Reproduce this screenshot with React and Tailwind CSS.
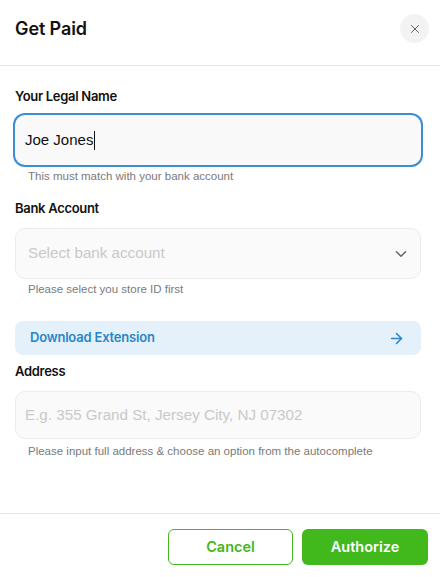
import { ChevronDown, X, ArrowRight } from "lucide-react";

const arial = { fontFamily: "'Liberation Sans', Arial, sans-serif" };

export default function App() {
  return (
    <div
      className="w-[440px] h-[577px] bg-white flex flex-col text-[#111]"
      style={{ fontFamily: "Inter, 'Noto Sans', sans-serif" }}
    >
      {/* Header */}
      <div className="h-[66px] shrink-0 flex items-center justify-between pl-[15px] pr-[11px] border-b border-[#e8e8e8]">
        <h1 className="text-[18px] font-semibold tracking-[-0.1px] -mt-[8px]">Get Paid</h1>
        <button className="w-[29px] h-[29px] -mt-[8px] rounded-full bg-[#f3f3f3] flex items-center justify-center text-[#555]">
          <X size={14} strokeWidth={1.6} />
        </button>
      </div>

      {/* Body */}
      <div className="flex-1 pl-[15px] pr-[19px] pt-[20px]">
        <label className="block text-[13px] leading-[20px] font-semibold tracking-[-0.3px]">Your Legal Name</label>
        <div className="mt-[9px] h-[50px] rounded-[10px] bg-[#f9f9f9] ring-2 ring-[#3a8ed3] flex items-center px-[10px]">
          <span className="text-[15px]" style={arial}>Joe Jones</span>
          <span className="w-px h-[19px] bg-[#111] ml-px" />
        </div>
        <p className="mt-[3px] pl-[13px] text-[11.5px] leading-[16px] text-[#7a7a7a]" style={arial}>
          This must match with your bank account
        </p>

        <label className="block mt-[14px] text-[13px] leading-[20px] font-semibold tracking-[-0.3px]">Bank Account</label>
        <div className="mt-[10px] h-[51px] rounded-[10px] bg-[#fafafa] border border-[#ececec] flex items-center justify-between pl-[12px] pr-[10px]">
          <span className="text-[15.2px] text-[#c9c9c9]" style={arial}>Select bank account</span>
          <ChevronDown size={18} strokeWidth={2} className="text-[#666]" />
        </div>
        <p className="mt-[2px] pl-[13px] text-[11.5px] leading-[16px] text-[#7a7a7a]" style={arial}>
          Please select you store ID first
        </p>

        <div className="mt-[24px] h-[34px] rounded-[8px] bg-[#e5f1fa] flex items-center justify-between pl-[15px] pr-[16px] text-[#2a86c9]">
          <span className="text-[13px] font-semibold tracking-[-0.2px]">Download Extension</span>
          <ArrowRight size={17} strokeWidth={2.2} />
        </div>

        <label className="block mt-[6px] text-[13px] leading-[20px] font-semibold tracking-[-0.3px]">Address</label>
        <div className="mt-[10px] h-[48px] rounded-[10px] bg-[#fafafa] border border-[#ececec] flex items-center px-[9px]">
          <span className="text-[15.2px] text-[#c9c9c9]" style={arial}>E.g. 355 Grand St, Jersey City, NJ 07302</span>
        </div>
        <p className="mt-[4px] pl-[13px] text-[11.5px] leading-[16px] text-[#7a7a7a]" style={arial}>
          Please input full address &amp; choose an option from the autocomplete
        </p>
      </div>

      {/* Footer */}
      <div className="shrink-0 border-t border-[#e8e8e8] pt-[15px] pb-[12px] pr-[12px] flex justify-end gap-[9px]">
        <button className="w-[125px] h-[36px] rounded-[6px] border border-[#41b81c] text-[#41b81c] text-[14.5px] font-semibold">
          Cancel
        </button>
        <button className="w-[126px] h-[36px] rounded-[6px] bg-[#41b81c] text-white text-[14.5px] font-semibold">
          Authorize
        </button>
      </div>
    </div>
  );
}
